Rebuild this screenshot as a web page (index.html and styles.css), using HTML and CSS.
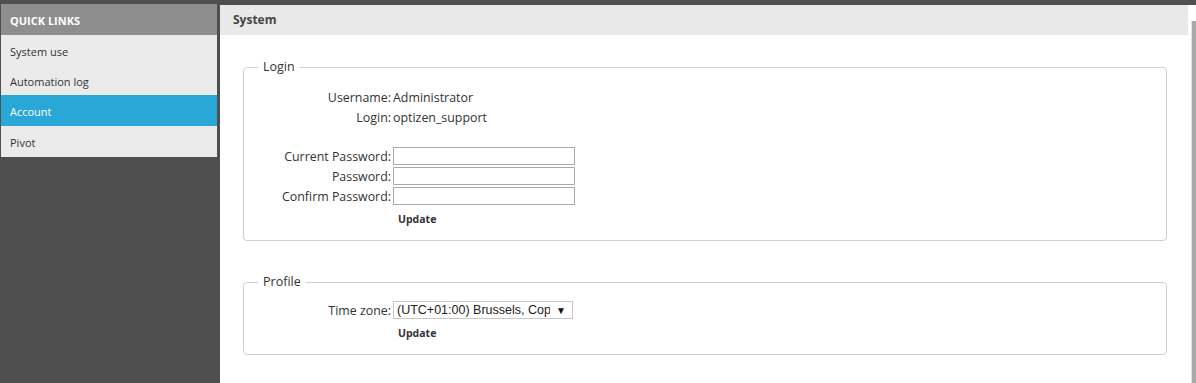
FILE: index.html
```html
<!DOCTYPE html>
<html lang="en">
<head>
    <meta charset="UTF-8">
    <title>System - Account</title>
    <link rel="stylesheet" href="styles.css">
</head>
<body>
    <div class="layout">
        <aside class="sidebar">
            <div class="sidebar-title">QUICK LINKS</div>
            <a class="nav-item" href="#">System use</a>
            <a class="nav-item" href="#">Automation log</a>
            <a class="nav-item active" href="#">Account</a>
            <a class="nav-item" href="#">Pivot</a>
        </aside>
        <main class="main">
            <div class="content">
                <div class="page-header">System</div>
                <div class="page-body">
                    <fieldset class="box box-login">
                        <legend>Login</legend>
                        <div class="form-grid info">
                            <span class="label">Username:</span><span>Administrator</span>
                            <span class="label">Login:</span><span>optizen_support</span>
                        </div>
                        <div class="form-grid passwords">
                            <label class="label" for="cur">Current Password:</label><input id="cur" type="password">
                            <label class="label" for="pwd">Password:</label><input id="pwd" type="password">
                            <label class="label" for="conf">Confirm Password:</label><input id="conf" type="password">
                        </div>
                        <div class="actions"><button class="update">Update</button></div>
                    </fieldset>

                    <fieldset class="box box-profile">
                        <legend>Profile</legend>
                        <div class="form-grid">
                            <label class="label" for="tz">Time zone:</label>
                            <span class="select-wrap">
                                <select id="tz">
                                    <option>(UTC+01:00) Brussels, Copenhagen, Madrid, Paris</option>
                                </select>
                            </span>
                        </div>
                        <div class="actions"><button class="update">Update</button></div>
                    </fieldset>
                </div>
            </div>
            <div class="scrollbar"><div class="scroll-thumb"></div></div>
        </main>
    </div>
</body>
</html>
```

FILE: styles.css
```css
html, body {
    height: 100%;
}

body {
    margin: 0;
    background-color: #4f4f4f;
    font-family: "Open Sans", Arial, sans-serif;
    font-size: 12px;
    color: #333;
    overflow: hidden;
}

.layout {
    display: flex;
    gap: 3px;
    height: 100%;
    padding: 4px 0 0 1px;
    box-sizing: border-box;
}

.sidebar {
    width: 216px;
    flex-shrink: 0;
    align-self: flex-start;
}

.sidebar-title {
    height: 31px;
    line-height: 33px;
    padding-left: 9px;
    background-color: #8e8e8e;
    color: #fff;
    font-weight: bold;
    font-size: 11px;
}

.nav-item {
    display: block;
    height: 30px;
    line-height: 33px;
    padding-left: 9px;
    background-color: #ebebeb;
    color: #333;
    text-decoration: none;
    font-size: 11px;
}

.nav-item.active,
.nav-item:last-child {
    height: 31px;
    line-height: 34px;
}

.nav-item.active {
    background-color: #29a8d8;
    color: #fff;
}

.main {
    flex: 1;
    display: flex;
    margin-top: 1px;
    background-color: #fff;
}

.content {
    flex: 1;
}

.page-header {
    height: 30px;
    line-height: 30px;
    padding-left: 13px;
    background-color: #e9e9e9;
    color: #444;
    font-weight: bold;
    font-size: 12px;
}

.page-body {
    padding: 23px 21px 0 23px;
}

.box {
    margin: 0;
    padding: 9px 14px 11px;
    border: 1px solid #cfcfcf;
    border-radius: 4px;
}

.box legend {
    padding: 0 5px;
    font-size: 12.5px;
    line-height: 18px;
}

.box-profile {
    margin-top: 32px;
}

.form-grid {
    display: grid;
    grid-template-columns: 133px 182px;
    grid-auto-rows: 20px;
    column-gap: 2px;
    align-items: center;
    font-size: 12.4px;
}

.form-grid .label {
    justify-self: end;
}

.info {
    padding-top: 2px;
}

.passwords {
    margin-top: 19px;
}

input {
    height: 18px;
    width: 182px;
    box-sizing: border-box;
    border: 1px solid #aaa;
    padding: 0 3px;
    margin: 0;
}

.select-wrap {
    position: relative;
    display: block;
    width: 180px;
    height: 18px;
}

.select-wrap select {
    appearance: none;
    width: 180px;
    height: 18px;
    box-sizing: border-box;
    border: 1px solid #c8c8c8;
    border-radius: 0;
    background: #fff;
    padding: 0 22px 0 3px;
    margin: 0;
    font-family: "Liberation Sans", Arial, sans-serif;
    font-size: 12.5px;
    color: #222;
}

.select-wrap::after {
    content: "\25BC";
    position: absolute;
    right: 7px;
    top: 2px;
    font-size: 10px;
    color: #111;
    pointer-events: none;
}

.actions {
    margin-top: 3px;
    padding-left: 135px;
    height: 20px;
}

.update {
    height: 20px;
    padding: 0 5px;
    border: none;
    background: none;
    font-family: "Open Sans", Arial, sans-serif;
    font-weight: bold;
    font-size: 10.5px;
    color: #333;
    cursor: pointer;
}

.scrollbar {
    width: 8px;
    flex-shrink: 0;
    padding-top: 16px;
    box-sizing: border-box;
    display: flex;
    justify-content: flex-end;
}

.scroll-thumb {
    width: 4px;
    border-left: 1px solid #e2e2e2;
    background-color: #a9a9a9;
}
```
